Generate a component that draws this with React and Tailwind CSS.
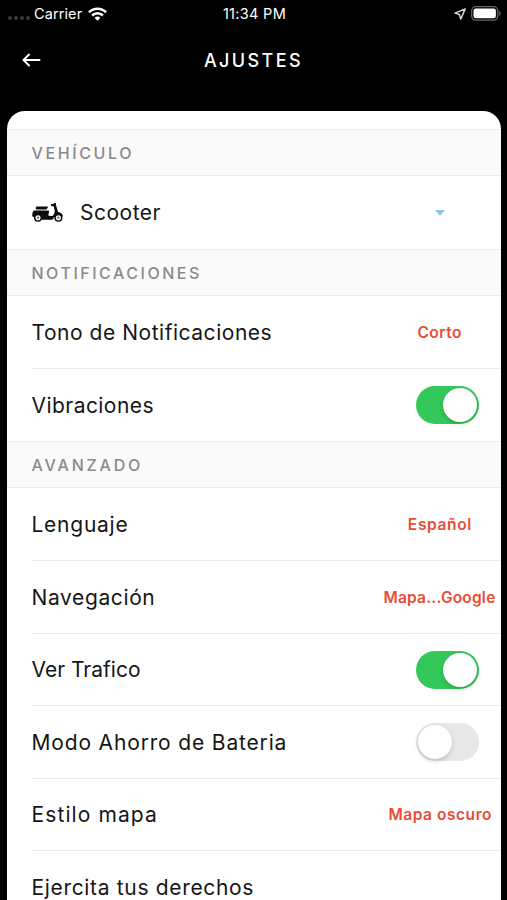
import React from 'react';

const sections = [
    {
        title: 'VEHÍCULO',
        tracking: 'tracking-[2.6px]',
        rows: [{ label: 'Scooter', tracking: 'tracking-[0.5px]', type: 'select', height: 'h-[73px]' }],
    },
    {
        title: 'NOTIFICACIONES',
        tracking: 'tracking-[2.52px]',
        rows: [
            { label: 'Tono de Notificaciones', tracking: 'tracking-[0.53px]', type: 'value', value: 'Corto', valueTracking: 'tracking-[0.5px]', height: 'h-[73px]', pad: 'pr-[39px]' },
            { label: 'Vibraciones', tracking: 'tracking-[0.45px]', type: 'switch', on: true, height: 'h-[72px]' },
        ],
    },
    {
        title: 'AVANZADO',
        tracking: 'tracking-[2.8px]',
        rows: [
            { label: 'Lenguaje', tracking: 'tracking-[0.75px]', type: 'value', value: 'Español', valueTracking: 'tracking-[0.65px]', height: 'h-[73px]', pad: 'pr-[29px]' },
            { label: 'Navegación', tracking: 'tracking-[0.62px]', type: 'value', value: 'Mapa...Google', valueTracking: 'tracking-[0.2px]', height: 'h-[73px]', pad: 'pr-[5.5px]' },
            { label: 'Ver Trafico', tracking: 'tracking-[0px]', type: 'switch', on: true, height: 'h-[72px]' },
            { label: 'Modo Ahorro de Bateria', tracking: 'tracking-[0.84px]', type: 'switch', on: false, height: 'h-[73px]' },
            { label: 'Estilo mapa', tracking: 'tracking-[1.1px]', type: 'value', value: 'Mapa oscuro', valueTracking: 'tracking-[0.55px]', height: 'h-[72px]', pad: 'pr-[9px]' },
            { label: 'Ejercita tus derechos', tracking: 'tracking-[0.67px]', type: 'link', height: 'h-[73px]' },
        ],
    },
];

const StatusBar = () => (
    <div className="grid grid-cols-3 items-center h-[27px] pl-2 pr-[6px] text-white">
        <div className="flex items-center">
            <div className="flex gap-[2px] mt-2">
                {[0, 1, 2, 3].map((dot) => (
                    <span key={dot} className="w-1 h-1 rounded-full bg-[#3a3a3a]" />
                ))}
            </div>
            <span className="ml-[4px] text-[14.5px] tracking-[0.1px]">Carrier</span>
            <svg className="ml-[6px] w-[19px] h-[14px]" viewBox="0 0 19 14" fill="none" stroke="#fff" strokeWidth="2.6">
                <path d="M1 5.2a12.1 12.1 0 0 1 17 0" />
                <path d="M4.1 8.5a7.7 7.7 0 0 1 10.8 0" />
                <path d="M9.5 13.8 6.6 10.9a4.1 4.1 0 0 1 5.8 0z" fill="#fff" stroke="none" />
            </svg>
        </div>
        <span className="text-center text-[14.5px] tracking-[0.3px]">11:34 PM</span>
        <div className="flex items-center justify-end gap-[5px]">
            <svg className="w-3 h-3" viewBox="0 0 12 12" fill="none" stroke="#ddd" strokeWidth="1.4" strokeLinejoin="round">
                <path d="M11.2.9 1 5.1l4.4 1.4 1.3 4.6z" />
            </svg>
            <svg className="w-[30px] h-[15px]" viewBox="0 0 30 15">
                <rect x=".7" y=".7" width="26" height="13.4" rx="4" fill="none" stroke="#666" strokeWidth="1.3" />
                <rect x="2.5" y="2.5" width="22.4" height="9.8" rx="2.2" fill="#fff" />
                <path d="M28.2 5v4.8c2-.9 2-3.9 0-4.8z" fill="#666" />
            </svg>
        </div>
    </div>
);

const ScooterIcon = () => (
    <svg className="w-[31px] h-5" viewBox="0 0 31 20" fill="#0c0c0c">
        {/* asiento */}
        <path d="M4.6 3.6h10.6c.7 0 .9.9.3 1.5l-1.1 1.5H4.4L3.4 5z" />
        {/* carrocería */}
        <path d="M1.8 7.4h14.4c.8 0 1 .7.8 1.4l-.6 2.8c-.1.8.3 1.4 1.2 1.4h2.2c.8 0 1.5-.5 1.8-1.3l1.3-3.2-1.2-5.2-1.8-.1a1.1 1.1 0 0 1 0-2.2l1.9-.2.4-.9h1.7v2.2l.5 1.3 1.7 5.5c2.7.4 4.6 2.1 4.9 4.4l-1.9.6H22c-.4 1.8-1.1 2.8-2.3 2.8h-9.4L.4 13.5C0 11.2.5 9 1.8 7.4z" />
        {/* ruedas */}
        <circle cx="6" cy="14.8" r="3.3" fill="#fff" stroke="#0c0c0c" strokeWidth="1.5" />
        <circle cx="26.4" cy="14.8" r="3.3" fill="#fff" stroke="#0c0c0c" strokeWidth="1.5" />
        <circle cx="6" cy="14.8" r="1.2" fill="#777" />
        <circle cx="26.4" cy="14.8" r="1.2" fill="#777" />
    </svg>
);

const Switch = ({ on }) => (
    <button
        role="switch"
        aria-checked={on}
        className={
            on
                ? 'flex items-center justify-end w-[63px] h-[38px] p-[2px] rounded-full bg-[#34c759]'
                : 'flex items-center justify-start w-[63px] h-[38px] p-[2px] rounded-full bg-[#e7e7e8]'
        }
    >
        <span className="w-[34px] h-[34px] rounded-full bg-white shadow-[0_2px_4px_rgba(0,0,0,0.18)]" />
    </button>
);

const Row = ({ row, last }) => (
    <div className={`${row.height} pl-6`}>
        <div className={last ? 'flex items-center justify-between h-full' : 'flex items-center justify-between h-full border-b border-[#e9e9e9]'}>
            <div className="flex items-center pl-[0.5px]">
                {row.type === 'select' && (
                    <span className="mr-[17.5px]">
                        <ScooterIcon />
                    </span>
                )}
                <span className={`pt-px text-[21px] text-[#161616] whitespace-nowrap ${row.tracking}`}>{row.label}</span>
            </div>
            {row.type === 'select' && (
                <svg className="w-[10px] h-[6px] mr-[56px]" viewBox="0 0 10 6" fill="#8cc8e6">
                    <path d="M0 0h10L5 6z" />
                </svg>
            )}
            {row.type === 'value' && (
                <span className={`pt-px text-[15.5px] font-semibold text-[#e94b35] whitespace-nowrap ${row.valueTracking} ${row.pad}`}>{row.value}</span>
            )}
            {row.type === 'switch' && (
                <div className="pr-[22px]">
                    <Switch on={row.on} />
                </div>
            )}
        </div>
    </div>
);

const App = () => {
    return (
        <div className="flex flex-col h-[900px] overflow-hidden bg-black font-['Inter','Liberation_Sans',sans-serif]">
            <StatusBar />
            {/* Cabecera */}
            <header className="grid grid-cols-[80px_1fr_80px] items-center h-[66px] text-white">
                <svg className="ml-[22px] w-[19px] h-[14px]" viewBox="0 0 19 14" fill="none" stroke="#fff" strokeWidth="2" strokeLinecap="round" strokeLinejoin="round">
                    <path d="M7 1.5 1.5 7 7 12.5M1.5 7h16" />
                </svg>
                <h1 className="text-center text-[18px] font-medium tracking-[2.4px]">AJUSTES</h1>
            </header>
            {/* Ajustes */}
            <main className="mt-[18px] ml-[7px] mr-[6px] flex-1 min-h-0 overflow-hidden rounded-t-[18px] bg-white pt-[18px]">
                {sections.map((section) => (
                    <section key={section.title}>
                        <h2 className={`flex items-center h-[47px] pl-[24.5px] border-y border-[#ebebeb] bg-[#fafafa] text-[16px] font-medium text-[#8a8a8a] ${section.tracking}`}>
                            {section.title}
                        </h2>
                        {section.rows.map((row, i) => (
                            <Row key={row.label} row={row} last={i === section.rows.length - 1} />
                        ))}
                    </section>
                ))}
            </main>
        </div>
    );
};

export default App;
